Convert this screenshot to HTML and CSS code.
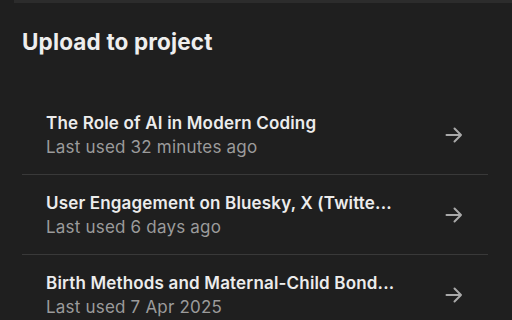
FILE: index.html
```html
<!DOCTYPE html>
<html lang="en">
<head>
<meta charset="utf-8">
<title>Upload to project</title>
<link rel="stylesheet" href="styles.css">
</head>
<body>
<div class="topbar"></div>
<main class="dialog">
  <h1 class="dialog-title">Upload to project</h1>
  <ul class="project-list">
    <li class="project-row">
      <div class="project-text">
        <div class="project-name">The Role of AI in Modern Coding</div>
        <div class="project-meta">Last used 32 minutes ago</div>
      </div>
      <svg class="arrow" viewBox="0 0 18 16" width="18" height="16" aria-hidden="true"><path d="M1.5 8H16M9.5 1.5L16 8l-6.5 6.5" fill="none" stroke="currentColor" stroke-width="2" stroke-linecap="round" stroke-linejoin="round"/></svg>
    </li>
    <li class="project-row">
      <div class="project-text">
        <div class="project-name">User Engagement on Bluesky, X (Twitte...</div>
        <div class="project-meta">Last used 6 days ago</div>
      </div>
      <svg class="arrow" viewBox="0 0 18 16" width="18" height="16" aria-hidden="true"><path d="M1.5 8H16M9.5 1.5L16 8l-6.5 6.5" fill="none" stroke="currentColor" stroke-width="2" stroke-linecap="round" stroke-linejoin="round"/></svg>
    </li>
    <li class="project-row">
      <div class="project-text">
        <div class="project-name">Birth Methods and Maternal-Child Bond...</div>
        <div class="project-meta">Last used 7 Apr 2025</div>
      </div>
      <svg class="arrow" viewBox="0 0 18 16" width="18" height="16" aria-hidden="true"><path d="M1.5 8H16M9.5 1.5L16 8l-6.5 6.5" fill="none" stroke="currentColor" stroke-width="2" stroke-linecap="round" stroke-linejoin="round"/></svg>
    </li>
  </ul>
</main>
</body>
</html>
```
FILE: styles.css
```css
* { box-sizing: border-box; }
html, body {
  margin: 0;
  padding: 0;
  height: 100%;
  overflow: hidden;
}
body {
  background: #1f1f1f;
  color: #ececec;
  font-family: Inter, "Noto Sans", sans-serif;
  -webkit-font-smoothing: antialiased;
}
.topbar {
  height: 3px;
  margin-left: 14px;
  background: #2c2c2c;
}
.dialog {
  padding: 25px 24px 0 22px;
}
.dialog-title {
  margin: 0;
  font-size: 22.5px;
  line-height: 28px;
  font-weight: 700;
  color: #eeeeee;
  letter-spacing: 0.15px;
}
.project-list {
  list-style: none;
  margin: 39px 0 0;
  padding: 0;
}
.project-row {
  display: flex;
  align-items: center;
  justify-content: space-between;
  height: 80px;
  padding: 0 25px 0 24px;
  border-bottom: 1px solid #393939;
}
.project-text {
  display: flex;
  flex-direction: column;
  gap: 2px;
  min-width: 0;
}
.project-name {
  font-size: 17px;
  line-height: 22px;
  font-weight: 600;
  color: #ececec;
  white-space: nowrap;
  letter-spacing: 0.17px;
}
.project-meta {
  font-size: 17px;
  line-height: 22px;
  font-weight: 400;
  color: #9b9b9b;
  white-space: nowrap;
  letter-spacing: 0.2px;
}
.arrow {
  flex: none;
  color: #a9a9a9;
}
```
